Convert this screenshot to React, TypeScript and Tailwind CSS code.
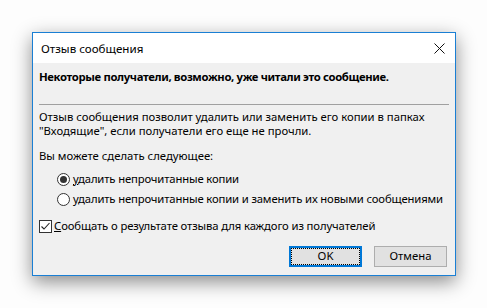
export default function App() {
  const font = { fontFamily: '"Segoe UI", "Noto Sans", sans-serif' };
  return (
    <div className="w-[487px] h-[308px] bg-[#fdfdfd] pt-[32px] pl-[32px]" style={font}>
      <div className="w-[424px] h-[244px] border border-[#1a7fd4] bg-[#f0f0f0] shadow-[0_6px_18px_rgba(0,0,0,0.45)] flex flex-col text-[11.3px] text-black whitespace-nowrap">
        <div className="h-[30px] bg-white flex items-center justify-between pl-[8px] pr-[10px] shrink-0">
          <span className="text-[11.6px] mt-[1px]">Отзыв сообщения</span>
          <svg width="11" height="11" viewBox="0 0 11 11">
            <path d="M0.5 0.5 L10.5 10.5 M10.5 0.5 L0.5 10.5" stroke="#111" strokeWidth="1" />
          </svg>
        </div>
        <div className="flex flex-col px-[6px]">
          <div className="mt-[6px] h-[16px] leading-[16px] font-bold tracking-[-0.35px]">Некоторые получатели, возможно, уже читали это сообщение.</div>
          <div className="mt-[19px] h-px bg-[#a0a0a0]" />
          <div className="mt-[5px] leading-[14px]">
            Отзыв сообщения позволит удалить или заменить его копии в папках<br />
            "Входящие", если получатели его еще не прочли.
          </div>
          <div className="mt-[11px] leading-[14px]">Вы можете сделать следующее:</div>
          <div className="mt-[9px] pl-[18px] flex flex-col gap-[6px] tracking-[-0.15px]">
            <label className="flex items-center gap-[3px] h-[14px]">
              <span className="w-[13px] h-[13px] rounded-full border border-[#333] bg-white flex items-center justify-center shrink-0">
                <span className="w-[7px] h-[7px] rounded-full bg-[#333]" />
              </span>
              <span><u>у</u>далить непрочитанные копии</span>
            </label>
            <label className="flex items-center gap-[3px] h-[14px]">
              <span className="w-[13px] h-[13px] rounded-full border border-[#333] bg-white shrink-0" />
              <span>у<u>д</u>алить непрочитанные копии и заменить их новыми сообщениями</span>
            </label>
          </div>
          <label className="mt-[13px] flex items-center gap-[2px] h-[14px] tracking-[-0.12px]">
            <span className="w-[13px] h-[13px] border border-[#333] bg-white flex items-center justify-center shrink-0">
              <svg width="11" height="11" viewBox="0 0 11 11">
                <path d="M1.5 5.5 L4 8 L9.5 2" stroke="#222" strokeWidth="1.1" fill="none" />
              </svg>
            </span>
            <span><u>С</u>ообщать о результате отзыва для каждого из получателей</span>
          </label>
          <div className="mt-[13px] flex justify-end gap-[12px] pr-[2px]">
            <button className="w-[73px] h-[21px] border-2 border-[#0078d7] bg-[#e1e1e1] flex items-center justify-center p-0">
              <span className="w-full h-full border border-dotted border-black flex items-center justify-center">OK</span>
            </button>
            <button className="w-[73px] h-[21px] border border-[#adadad] bg-[#e1e1e1] flex items-center justify-center">Отмена</button>
          </div>
        </div>
      </div>
    </div>
  );
}
